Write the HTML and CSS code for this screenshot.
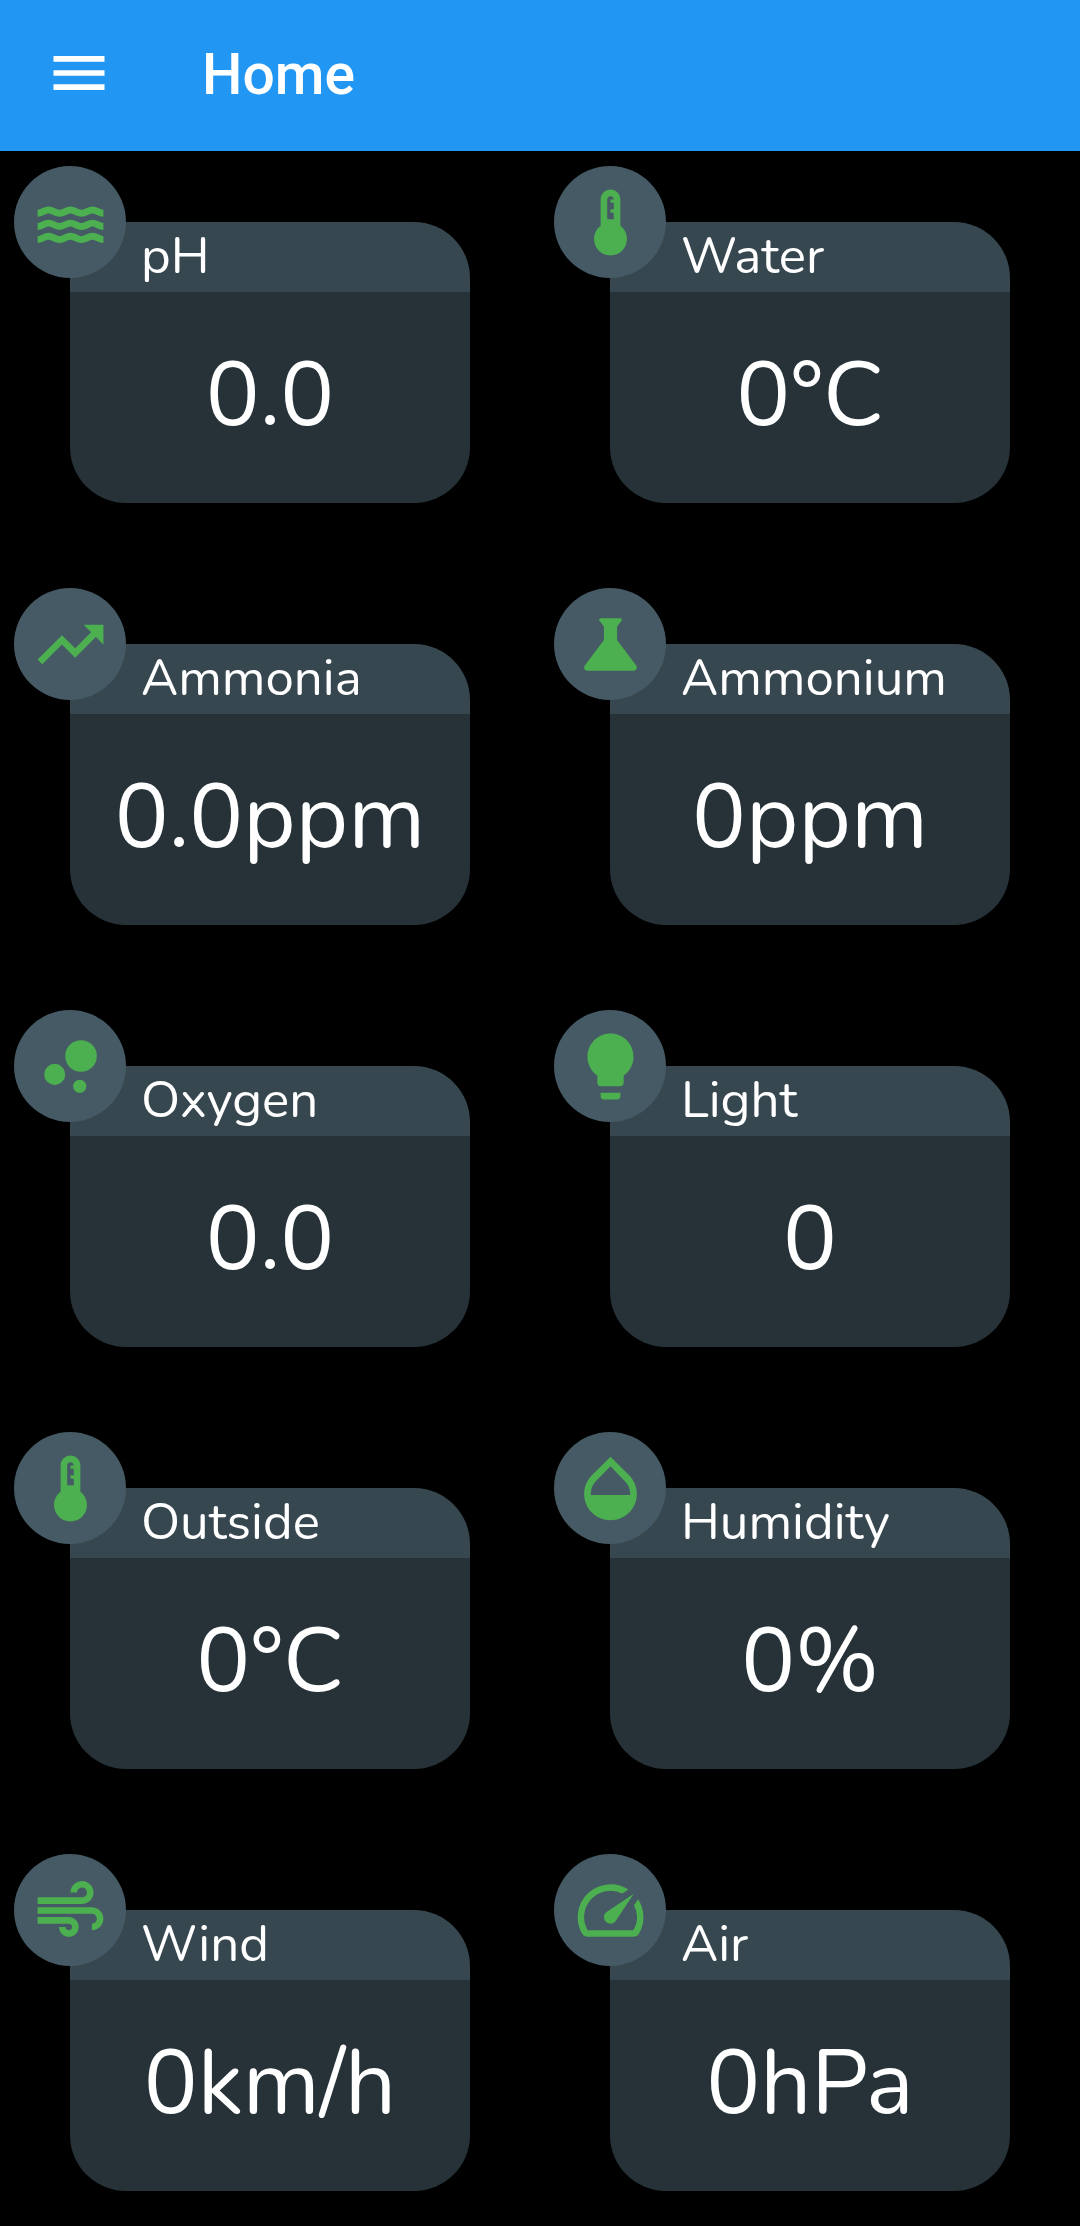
FILE: index.html
```html
<!DOCTYPE html>
<html lang="en">
<head>
<meta charset="utf-8">
<meta name="viewport" content="width=device-width, initial-scale=1">
<title>Home</title>
<link rel="stylesheet" href="styles.css">
</head>
<body>
<header class="app-bar">
  <button class="menu-button" type="button" aria-label="Open navigation menu">
    <svg class="menu-icon" viewBox="0 0 24 24" aria-hidden="true"><path d="M3 18h18v-2H3v2zm0-5h18v-2H3v2zm0-7v2h18V6H3z"/></svg>
  </button>
  <h1 class="app-title">Home</h1>
</header>
<main class="sensors">
  <section class="card">
    <span class="badge"><svg class="icon" viewBox="0 0 24 24" aria-hidden="true"><g fill="none" stroke="currentColor" stroke-width="2.1"><path id="wave" d="M2 9.2C3.3 9.2 4 8.2 5.33 8.2S7.3 9.2 8.67 9.2 10.7 8.2 12 8.2 14 9.2 15.33 9.2 17.4 8.2 18.67 8.2 20.7 9.2 22 9.2"/><use href="#wave" y="4"/><use href="#wave" y="8"/></g></svg></span>
    <h2 class="label">pH</h2>
    <p class="value">0.0</p>
  </section>
  <section class="card">
    <span class="badge"><svg class="icon" viewBox="0 0 24 24" aria-hidden="true"><path d="M15 13V5c0-1.66-1.34-3-3-3S9 3.34 9 5v8c-1.21.91-2 2.37-2 4 0 2.76 2.24 5 5 5s5-2.24 5-5c0-1.63-.79-3.09-2-4zm-4-8c0-.55.45-1 1-1s1 .45 1 1h-1v1h1v2h-1v1h1v2h-2V5z"/></svg></span>
    <h2 class="label">Water</h2>
    <p class="value">0°C</p>
  </section>
  <section class="card">
    <span class="badge"><svg class="icon" viewBox="0 0 24 24" aria-hidden="true"><path d="M16 6l2.29 2.29-4.88 4.88-4-4L2 16.59 3.41 18l6-6 4 4 6.3-6.29L22 12V6z"/></svg></span>
    <h2 class="label">Ammonia</h2>
    <p class="value">0.0ppm</p>
  </section>
  <section class="card">
    <span class="badge"><svg class="icon" viewBox="0 0 24 24" aria-hidden="true"><path d="M19.8 18.4L14 10.67V6.5l1.35-1.69c.26-.33.03-.81-.39-.81H9.04c-.42 0-.65.48-.39.81L10 6.5v4.17L4.2 18.4c-.49.66-.02 1.6.8 1.6h14c.82 0 1.29-.94.8-1.6z"/></svg></span>
    <h2 class="label">Ammonium</h2>
    <p class="value">0ppm</p>
  </section>
  <section class="card">
    <span class="badge"><svg class="icon" viewBox="0 0 24 24" aria-hidden="true"><circle cx="7.2" cy="14.4" r="3.2"/><circle cx="14.8" cy="18" r="2"/><circle cx="15.2" cy="8.8" r="4.8"/></svg></span>
    <h2 class="label">Oxygen</h2>
    <p class="value">0.0</p>
  </section>
  <section class="card">
    <span class="badge"><svg class="icon" viewBox="0 0 24 24" aria-hidden="true"><path d="M9 21c0 .55.45 1 1 1h4c.55 0 1-.45 1-1v-1H9v1zm3-19C8.14 2 5 5.14 5 9c0 2.38 1.19 4.47 3 5.74V17c0 .55.45 1 1 1h6c.55 0 1-.45 1-1v-2.26c1.81-1.27 3-3.36 3-5.74 0-3.86-3.14-7-7-7z"/></svg></span>
    <h2 class="label">Light</h2>
    <p class="value">0</p>
  </section>
  <section class="card">
    <span class="badge"><svg class="icon" viewBox="0 0 24 24" aria-hidden="true"><path d="M15 13V5c0-1.66-1.34-3-3-3S9 3.34 9 5v8c-1.21.91-2 2.37-2 4 0 2.76 2.24 5 5 5s5-2.24 5-5c0-1.63-.79-3.09-2-4zm-4-8c0-.55.45-1 1-1s1 .45 1 1h-1v1h1v2h-1v1h1v2h-2V5z"/></svg></span>
    <h2 class="label">Outside</h2>
    <p class="value">0°C</p>
  </section>
  <section class="card">
    <span class="badge"><svg class="icon" viewBox="0 0 24 24" aria-hidden="true"><path d="M17.66 8L12 2.35 6.34 8C4.78 9.56 4 11.64 4 13.64s.78 4.11 2.34 5.67 3.61 2.35 5.66 2.35 4.1-.79 5.66-2.35S20 15.64 20 13.64 19.22 9.56 17.66 8zM6 14c.01-2 .62-3.27 1.76-4.4L12 5.27l4.24 4.38C17.38 10.77 17.99 12 18 14H6z"/></svg></span>
    <h2 class="label">Humidity</h2>
    <p class="value">0%</p>
  </section>
  <section class="card">
    <span class="badge"><svg class="icon" viewBox="0 0 24 24" aria-hidden="true"><path d="M14.5 17c0 1.65-1.35 3-3 3s-3-1.35-3-3h2c0 .55.45 1 1 1s1-.45 1-1-.45-1-1-1H2v-2h9.5c1.65 0 3 1.35 3 3zM19 6.5C19 4.57 17.43 3 15.5 3S12 4.57 12 6.5h2c0-.83.67-1.5 1.5-1.5s1.5.67 1.5 1.5S16.33 8 15.5 8H2v2h13.5c1.93 0 3.5-1.57 3.5-3.5zM18.5 11H2v2h16.5c.83 0 1.5.67 1.5 1.5s-.67 1.5-1.5 1.5v2c1.93 0 3.5-1.57 3.5-3.5S20.43 11 18.5 11z"/></svg></span>
    <h2 class="label">Wind</h2>
    <p class="value">0km/h</p>
  </section>
  <section class="card">
    <span class="badge"><svg class="icon" viewBox="0 0 24 24" aria-hidden="true"><path d="M20.38 8.57l-1.23 1.85a8 8 0 0 1-.22 7.58H5.07A8 8 0 0 1 15.58 6.85l1.85-1.23A10 10 0 0 0 3.35 19a2 2 0 0 0 1.72 1h13.85a2 2 0 0 0 1.74-1 10 10 0 0 0-.27-10.44zM10.59 15.41a2 2 0 0 0 2.83 0l5.66-8.49-8.49 5.66a2 2 0 0 0 0 2.83z"/></svg></span>
    <h2 class="label">Air</h2>
    <p class="value">0hPa</p>
  </section>
</main>
</body>
</html>
```
FILE: styles.css
```css
* {
  box-sizing: border-box;
}

body {
  margin: 0;
  background: #000;
  color: #fff;
  font-family: Nunito, Lato, sans-serif;
}

.app-bar {
  display: flex;
  align-items: center;
  gap: 89px;
  padding: 37px 45px 42px;
  background: #2196f3;
}

.menu-button {
  display: flex;
  padding: 0;
  border: 0;
  background: none;
  color: inherit;
}

.menu-icon {
  width: 68px;
  height: 68px;
  fill: currentColor;
}

.app-title {
  margin: 0;
  padding-top: 4px;
  font: 500 57px/68px Roboto, sans-serif;
}

.sensors {
  display: grid;
  grid-template-columns: 1fr 1fr;
  gap: 141px 140px;
  padding: 71px 70px 35px;
}

.card {
  position: relative;
  border-radius: 56px;
  background: linear-gradient(#37474f 70px, #263238 70px);
}

/* Round icon centred on the card's top left corner */
.badge {
  position: absolute;
  top: -56px;
  left: -56px;
  display: flex;
  align-items: center;
  justify-content: center;
  width: 112px;
  height: 112px;
  border-radius: 50%;
  background: #455a64;
  color: #4caf50;
}

.icon {
  width: 79px;
  height: 79px;
  fill: currentColor;
}

.label {
  margin: 0;
  padding: 4px 0 6px 71px;
  font-size: 51px;
  font-weight: 400;
  line-height: 60px;
}

.value {
  margin: 0;
  padding: 50px 0 53px;
  font-size: 90px;
  line-height: 108px;
  text-align: center;
}
```
